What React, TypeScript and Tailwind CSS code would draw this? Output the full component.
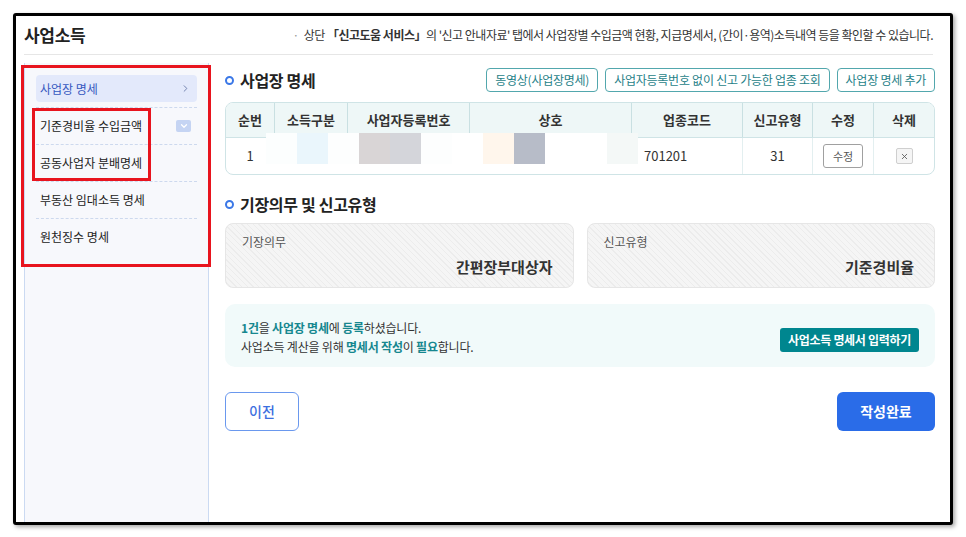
import { ChevronRight, ChevronDown, X } from "lucide-react"

const sideItems = [
  { name: "사업장 명세", active: true },
  { name: "기준경비율 수입금액", toggle: true },
  { name: "공동사업자 분배명세" },
  { name: "부동산 임대소득 명세" },
  { name: "원천징수 명세" },
]

const columns = [
  { label: "순번", w: "w-[48px]" },
  { label: "소득구분", w: "w-[73px]" },
  { label: "사업자등록번호", w: "w-[122px]" },
  { label: "상호", w: "w-[162px]" },
  { label: "업종코드", w: "w-[111px]" },
  { label: "신고유형", w: "w-[70px]" },
  { label: "수정", w: "w-[61px]" },
  { label: "삭제", w: "w-[61px]" },
]

// masked cells over the private columns of the row
const maskTiles = [
  "bg-[#fcfefe]",
  "bg-[#eaf6fc]",
  "bg-[#fdfefe]",
  "bg-[#d9d5d6]",
  "bg-[#d4d5da]",
  "bg-[#fdfefe]",
  "bg-[#ffffff]",
  "bg-[#fff6ec]",
  "bg-[#b7bcc8]",
  "bg-[#ffffff]",
  "bg-[#ffffff]",
  "bg-[#f4f8f7]",
]

function SectionTitle({ children }: { children: React.ReactNode }) {
  return (
    <div className="flex items-center gap-[6px]">
      <span className="w-[9px] h-[9px] rounded-full border-2 border-[#3b78e7]" />
      <span className="text-[16px] font-bold text-[#222] tracking-[-0.3px]">{children}</span>
    </div>
  )
}

function OutlineButton({ children }: { children: React.ReactNode }) {
  return (
    <button className="h-[24px] px-[8px] rounded-[4px] border border-[#52a7ad] bg-white text-[12px] tracking-[-0.25px] text-[#1f7f88]">
      {children}
    </button>
  )
}

function InfoCard({ label, value }: { label: string; value: string }) {
  return (
    <div className="flex-1 h-[65px] rounded-[8px] border border-[#e6e6e6] bg-[repeating-linear-gradient(45deg,#f5f5f5_0px,#f5f5f5_3px,#ececec_3px,#ececec_4px)] pl-[16px] pr-[20px] pt-[9px]">
      <div className="text-[12px] text-[#555]">{label}</div>
      <div className="text-right text-[15px] font-semibold text-[#333] leading-[20px] mt-[6px]">{value}</div>
    </div>
  )
}

export default function App() {
  return (
    <div className="min-h-screen bg-white pt-[13px] pl-[13px] font-['Noto_Sans_CJK_KR',sans-serif]">
      <div className="w-[940px] h-[512px] border-[3px] border-black rounded-[3px] shadow-[2px_2px_4px_rgba(0,0,0,0.35)] overflow-hidden flex flex-col pl-[8px] pr-[17px] bg-white">
        {/* Page header */}
        <div className="h-[39px] flex items-center justify-between border-b border-[#e6e6e6] shrink-0">
          <h1 className="text-[17px] font-bold text-[#222] tracking-[-0.3px]">사업소득</h1>
          <p className="text-[12px] text-[#333] tracking-[-0.5px]">
            <span className="text-[#999] mr-[5px]">·</span>
            상단 <b className="font-bold">「신고도움 서비스」</b>의 '신고 안내자료' 탭에서 사업장별 수입금액 현황, 지급명세서, (간이·용역)소득내역 등을 확인할 수 있습니다.
          </p>
        </div>

        <div className="flex flex-1 mt-[8px]">
          {/* Side menu */}
          <aside className="relative w-[185px] shrink-0 bg-[#f7f8fc] border-x border-[#cbdaf2] pt-[12px] px-[11px]">
            {sideItems.map((item, i) => (
              <div key={item.name} className={i < sideItems.length - 1 ? "border-b border-dashed border-[#cdd9ee]" : ""}>
                {item.active ? (
                  <div className="mb-[5px] h-[27px] rounded-[4px] bg-[#e3e9fb] flex items-center justify-between pl-[4px] pr-[6px]">
                    <span className="text-[12px] text-[#3558c0]">{item.name}</span>
                    <ChevronRight className="w-[11px] h-[11px] text-[#6a7ba8]" strokeWidth={2} />
                  </div>
                ) : (
                  <div className="h-[36px] flex items-center justify-between pl-[4px] pr-[6px]">
                    <span className="text-[12px] text-[#222]">{item.name}</span>
                    {item.toggle && (
                      <span className="w-[15px] h-[12px] rounded-[2px] bg-[#c5d4f3] flex items-center justify-center">
                        <ChevronDown className="w-[10px] h-[10px] text-white" strokeWidth={3} />
                      </span>
                    )}
                  </div>
                )}
              </div>
            ))}

            {/* highlight boxes */}
            <div className="absolute left-[-4px] top-[2px] w-[190px] h-[202px] border-[3px] border-[#e8141e] pointer-events-none" />
            <div className="absolute left-[7px] top-[45px] w-[119px] h-[73px] border-[3px] border-[#e8141e] pointer-events-none" />
          </aside>

          {/* Main content */}
          <main className="flex-1 pl-[16px] pt-[5px]">
            <div className="flex items-center justify-between h-[24px]">
              <SectionTitle>사업장 명세</SectionTitle>
              <div className="flex gap-[7px]">
                <OutlineButton>동영상(사업장명세)</OutlineButton>
                <OutlineButton>사업자등록번호 없이 신고 가능한 업종 조회</OutlineButton>
                <OutlineButton>사업장 명세 추가</OutlineButton>
              </div>
            </div>

            {/* Business table */}
            <div className="relative mt-[10px] rounded-[8px] border border-[#cfe4e6] overflow-hidden">
              <div className="flex h-[35px] bg-[#eef7f7] border-b border-[#cfe4e6]">
                {columns.map((c, i) => (
                  <div
                    key={c.label}
                    className={`${c.w} flex items-center justify-center text-[13px] font-bold text-[#333] ${i > 0 ? "border-l border-[#c9e0e2]" : ""}`}
                  >
                    {c.label}
                  </div>
                ))}
              </div>
              <div className="flex h-[36px] text-[13px] text-[#333]">
                <div className="w-[48px] flex items-center justify-center">1</div>
                <div className="w-[73px] border-l border-[#e3eff0]" />
                <div className="w-[122px] border-l border-[#e3eff0]" />
                <div className="w-[162px] border-l border-[#e3eff0]" />
                <div className="w-[111px] border-l border-[#e3eff0] flex items-center pl-[12px]">701201</div>
                <div className="w-[70px] border-l border-[#e3eff0] flex items-center justify-center">31</div>
                <div className="w-[61px] border-l border-[#e3eff0] flex items-center justify-center">
                  <button className="w-[40px] h-[24px] rounded-[3px] border border-[#a0a0a0] bg-white text-[11px] text-[#555]">수정</button>
                </div>
                <div className="w-[61px] border-l border-[#e3eff0] flex items-center justify-center">
                  <button className="w-[17px] h-[16px] rounded-[2px] border border-[#cfcfcf] bg-[#f5f5f5] flex items-center justify-center">
                    <X className="w-[9px] h-[9px] text-[#555]" strokeWidth={2.2} />
                  </button>
                </div>
              </div>

              {/* masked area */}
              <div className="absolute left-[40px] top-[30px] w-[372px] h-[43px] bg-white flex flex-col">
                <div className="grid grid-cols-12 h-[31px]">
                  {maskTiles.map((t, i) => (
                    <div key={i} className={t} />
                  ))}
                </div>
              </div>
            </div>

            <div className="mt-[17px] h-[24px] flex items-center">
              <SectionTitle>기장의무 및 신고유형</SectionTitle>
            </div>

            <div className="mt-[7px] flex gap-[13px]">
              <InfoCard label="기장의무" value="간편장부대상자" />
              <InfoCard label="신고유형" value="기준경비율" />
            </div>

            {/* Notice */}
            <div className="mt-[16px] h-[63px] rounded-[10px] bg-[#f1fafa] flex items-center justify-between pl-[16px] pr-[16px]">
              <div className="text-[12px] leading-[19px] text-[#333] mt-[2px] tracking-[-0.2px]">
                <p>
                  <b className="text-[#16878f]">1건</b>을 <b className="text-[#16878f]">사업장 명세</b>에 <b className="text-[#16878f]">등록</b>하셨습니다.
                </p>
                <p>
                  사업소득 계산을 위해 <b className="text-[#16878f]">명세서 작성</b>이 <b className="text-[#16878f]">필요</b>합니다.
                </p>
              </div>
              <button className="h-[24px] px-[8px] mt-[8px] rounded-[3px] bg-[#00868f] text-white text-[12px] font-bold tracking-[-0.3px]">
                사업소득 명세서 입력하기
              </button>
            </div>

            <div className="mt-[25px] flex justify-between">
              <button className="w-[74px] h-[39px] rounded-[6px] border border-[#6a98ee] bg-white text-[14px] font-medium text-[#3d6fe0]">
                이전
              </button>
              <button className="w-[98px] h-[39px] rounded-[6px] bg-[#2a6ce8] text-[14px] font-bold text-white">
                작성완료
              </button>
            </div>
          </main>
        </div>
      </div>
    </div>
  )
}
